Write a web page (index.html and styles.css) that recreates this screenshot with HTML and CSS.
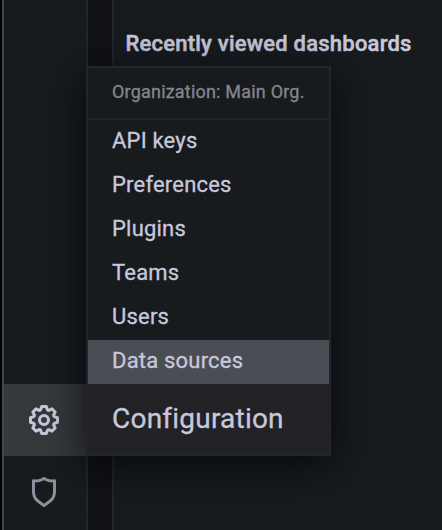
FILE: index.html
```html
<!DOCTYPE html>
<html lang="en">
<head>
<meta charset="utf-8">
<title>Configuration menu</title>
<link rel="stylesheet" href="styles.css">
</head>
<body>
<div class="app">
  <nav class="sidebar">
    <div class="nav-item active">
      <svg class="icon" viewBox="0 0 24 24"><path d="M21.32,9.55l-1.89-.63.89-1.78A1,1,0,0,0,20.13,6L18,3.87a1,1,0,0,0-1.15-.19l-1.78.89-.63-1.89A1,1,0,0,0,13.5,2h-3a1,1,0,0,0-.95.68L8.92,4.57,7.14,3.68A1,1,0,0,0,6,3.87L3.87,6a1,1,0,0,0-.19,1.15l.89,1.78-1.89.63A1,1,0,0,0,2,10.5v3a1,1,0,0,0,.68.95l1.89.63-.89,1.78A1,1,0,0,0,3.87,18L6,20.13a1,1,0,0,0,1.15.19l1.78-.89.63,1.89a1,1,0,0,0,.95.68h3a1,1,0,0,0,.95-.68l.63-1.89,1.78.89A1,1,0,0,0,18,20.13L20.13,18a1,1,0,0,0,.19-1.15l-.89-1.78,1.89-.63A1,1,0,0,0,22,13.5v-3A1,1,0,0,0,21.32,9.55ZM20,12.78l-1.2.4A2,2,0,0,0,17.64,16l.57,1.14-1.1,1.1L16,17.64a2,2,0,0,0-2.79,1.16l-.4,1.2H11.22l-.4-1.2A2,2,0,0,0,8,17.64l-1.14.57-1.1-1.1L6.36,16A2,2,0,0,0,5.2,13.18L4,12.78V11.22l1.2-.4A2,2,0,0,0,6.36,8L5.79,6.89l1.1-1.1L8,6.36A2,2,0,0,0,10.82,5.2l.4-1.2h1.56l.4,1.2A2,2,0,0,0,16,6.36l1.14-.57,1.1,1.1L17.64,8a2,2,0,0,0,1.16,2.79l1.2.4ZM12,8a4,4,0,1,0,4,4A4,4,0,0,0,12,8Zm0,6a2,2,0,1,1,2-2A2,2,0,0,1,12,14Z"/></svg>
    </div>
    <div class="nav-item">
      <svg class="icon" viewBox="0 0 24 24"><path d="M19.63,3.65a1,1,0,0,0-.84-.2,8,8,0,0,1-6.22-1.27,1,1,0,0,0-1.14,0A8,8,0,0,1,5.21,3.45a1,1,0,0,0-.84.2A1,1,0,0,0,4,4.43v7.45a9,9,0,0,0,3.77,7.33l3.65,2.6a1,1,0,0,0,1.16,0l3.65-2.6A9,9,0,0,0,20,11.88V4.43A1,1,0,0,0,19.63,3.65ZM18,11.88a7,7,0,0,1-2.93,5.7L12,19.77,8.93,17.58A7,7,0,0,1,6,11.88V5.58a10,10,0,0,0,6-1.39,10,10,0,0,0,6,1.39Z"/></svg>
    </div>
  </nav>
  <main class="panel">
    <h2 class="panel-title">Recently viewed dashboards</h2>
  </main>
  <div class="menu">
    <div class="menu-org">Organization: Main Org.</div>
    <a class="menu-item">API keys</a>
    <a class="menu-item">Preferences</a>
    <a class="menu-item">Plugins</a>
    <a class="menu-item">Teams</a>
    <a class="menu-item">Users</a>
    <a class="menu-item hover">Data sources</a>
    <div class="menu-title">Configuration</div>
  </div>
</div>
</body>
</html>
```
FILE: styles.css
```css
* { box-sizing: border-box; }
body {
  margin: 0;
  background: #111217;
  color: #c8c8dc;
  font-family: Roboto, "Liberation Sans", sans-serif;
  letter-spacing: 0.2px;
  -webkit-text-stroke: 0.3px currentColor;
}
.app {
  position: relative;
  display: flex;
  gap: 24px;
  height: 530px;
  overflow: hidden;
  border-left: 2px solid #030405;
}
.sidebar {
  display: flex;
  flex-direction: column;
  justify-content: flex-end;
  width: 86px;
  padding-bottom: 2px;
  background: #171b1e;
  border-left: 2px solid #424548;
  border-right: 2px solid #22252a;
}
.nav-item {
  display: flex;
  flex: none;
  align-items: center;
  justify-content: center;
  height: 72px;
  padding-right: 2px;
  color: #8e8f9b;
}
.nav-item.active {
  margin-left: -2px;
  background: #35393c;
  color: #c8c8dc;
  border-left: 2px solid #44474a;
}
.icon {
  width: 36px;
  height: 36px;
  fill: currentColor;
}
.panel {
  flex: 1;
  padding: 30px 0 0 11.5px;
  background: #171b1e;
  border-left: 2px solid #22252a;
}
.panel-title {
  margin: 0;
  font-size: 22px;
  font-weight: 500;
  line-height: 28px;
  white-space: nowrap;
  letter-spacing: 0.22px;
  -webkit-text-stroke-width: 0.5px;
}
.menu {
  position: absolute;
  left: 84px;
  top: 66px;
  width: 245px;
  height: 390px;
  background: #171b1e;
  border: 2px solid #22252a;
  box-shadow: 0 8px 38px rgba(1, 4, 9, 0.8);
  white-space: nowrap;
}
.menu-org {
  height: 52px;
  padding-left: 24px;
  border-bottom: 2px solid #22252a;
  color: #85868f;
  font-size: 18px;
  line-height: 48px;
}
.menu-item {
  display: block;
  height: 44px;
  padding-left: 24px;
  font-size: 22px;
  line-height: 41px;
}
.menu-item.hover { background: #4b4d55; }
.menu-title {
  height: 70px;
  padding-left: 24px;
  background: #222226;
  font-size: 28px;
  letter-spacing: 0.22px;
  line-height: 69px;
}
```
